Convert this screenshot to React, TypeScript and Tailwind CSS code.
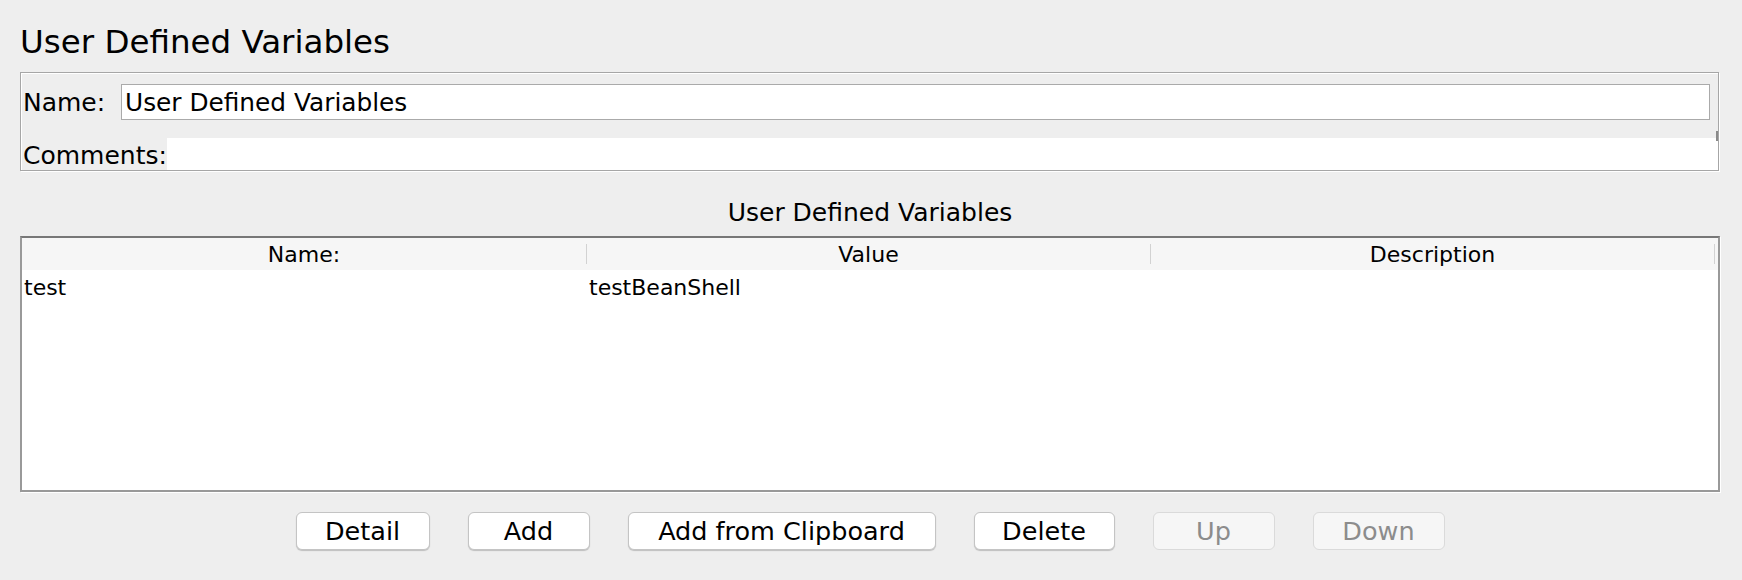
import React from 'react';

interface Variable {
    name: string;
    value: string;
    description: string;
}

const rows: Variable[] = [{ name: 'test', value: 'testBeanShell', description: '' }];

const columns = [
    { label: 'Name:', width: 'w-[565px]' },
    { label: 'Value', width: 'w-[564px]' },
    { label: 'Description', width: 'w-[564px]' },
];

const buttons = [
    { label: 'Detail', width: 'w-[134px]', disabled: false },
    { label: 'Add', width: 'w-[122px]', disabled: false },
    { label: 'Add from Clipboard', width: 'w-[308px]', disabled: false },
    { label: 'Delete', width: 'w-[141px]', disabled: false },
    { label: 'Up', width: 'w-[122px]', disabled: true },
    { label: 'Down', width: 'w-[132px]', disabled: true },
];

export default function App() {
    return (
        <div className="min-h-[580px] bg-[#eeeeee] pl-5 pt-[22px] font-['DejaVu_Sans',sans-serif] text-black">
            <h1 className="text-[32.5px] leading-[40px]">User Defined Variables</h1>

            {/* name / comments panel */}
            <div className="relative mt-[10px] w-[1699px] border border-[#a6a6a6] pt-[11px] shadow-[inset_1px_1px_0_#fff,1px_1px_0_#fff]">
                <div className="flex h-[36px] items-center pr-[8px]">
                    <span className="w-[100px] pl-[2px] pt-[1px] text-[25px] leading-[36px]">Name:</span>
                    <div className="h-[36px] flex-1 border border-[#aaaaaa] bg-white pl-[3px] pt-[1px] text-[24.8px] leading-[34px]">
                        User Defined Variables
                    </div>
                </div>
                <div className="mt-[18px] flex h-[32px] items-start">
                    <span className="w-[146px] pl-[2px] pt-[2px] text-[25px] leading-[32px]">Comments:</span>
                    <div className="h-[32px] flex-1 bg-white" />
                </div>
                <div className="absolute right-0 top-[58px] h-[10px] w-[2px] bg-[#8a8a8a]" />
            </div>

            <div className="mt-[28px] w-[1700px] text-center text-[25px] leading-[28px]">User Defined Variables</div>

            {/* table */}
            <div className="mt-[9px] w-[1700px] border-2 border-[#999999] border-t-[#777777] bg-white shadow-[1px_1px_0_#fff]">
                <div className="flex h-[32px] bg-[#f6f6f6]">
                    {columns.map((c) => (
                        <div key={c.label} className={`flex h-[32px] items-center ${c.width}`}>
                            <span className="flex-1 pt-[1px] text-center text-[22px] leading-[32px]">{c.label}</span>
                            <div className="h-[20px] w-px bg-[#d2d2d2]" />
                        </div>
                    ))}
                </div>
                <div className="h-[220px]">
                    {rows.map((r) => (
                        <div key={r.name} className="flex h-[32px] pt-[2px] text-[22px] leading-[32px]">
                            <div className="w-[565px] pl-[2px]">{r.name}</div>
                            <div className="w-[564px] pl-[2px]">{r.value}</div>
                            <div className="w-[564px] pl-[2px]">{r.description}</div>
                        </div>
                    ))}
                </div>
            </div>

            {/* buttons */}
            <div className="mt-[20px] flex w-[1700px] justify-center gap-[38px]">
                {buttons.map((b) => (
                    <button
                        key={b.label}
                        disabled={b.disabled}
                        className={`h-[38px] ${b.width} rounded-[6px] border text-center text-[25.5px] leading-[36px] ${
                            b.disabled
                                ? 'border-[#dadada] bg-[#f6f6f6] text-[#8c8c8c]'
                                : 'border-[#c4c4c4] bg-white text-black shadow-[0_1px_1px_rgba(0,0,0,0.2)]'
                        }`}
                    >
                        {b.label}
                    </button>
                ))}
            </div>
        </div>
    );
}
